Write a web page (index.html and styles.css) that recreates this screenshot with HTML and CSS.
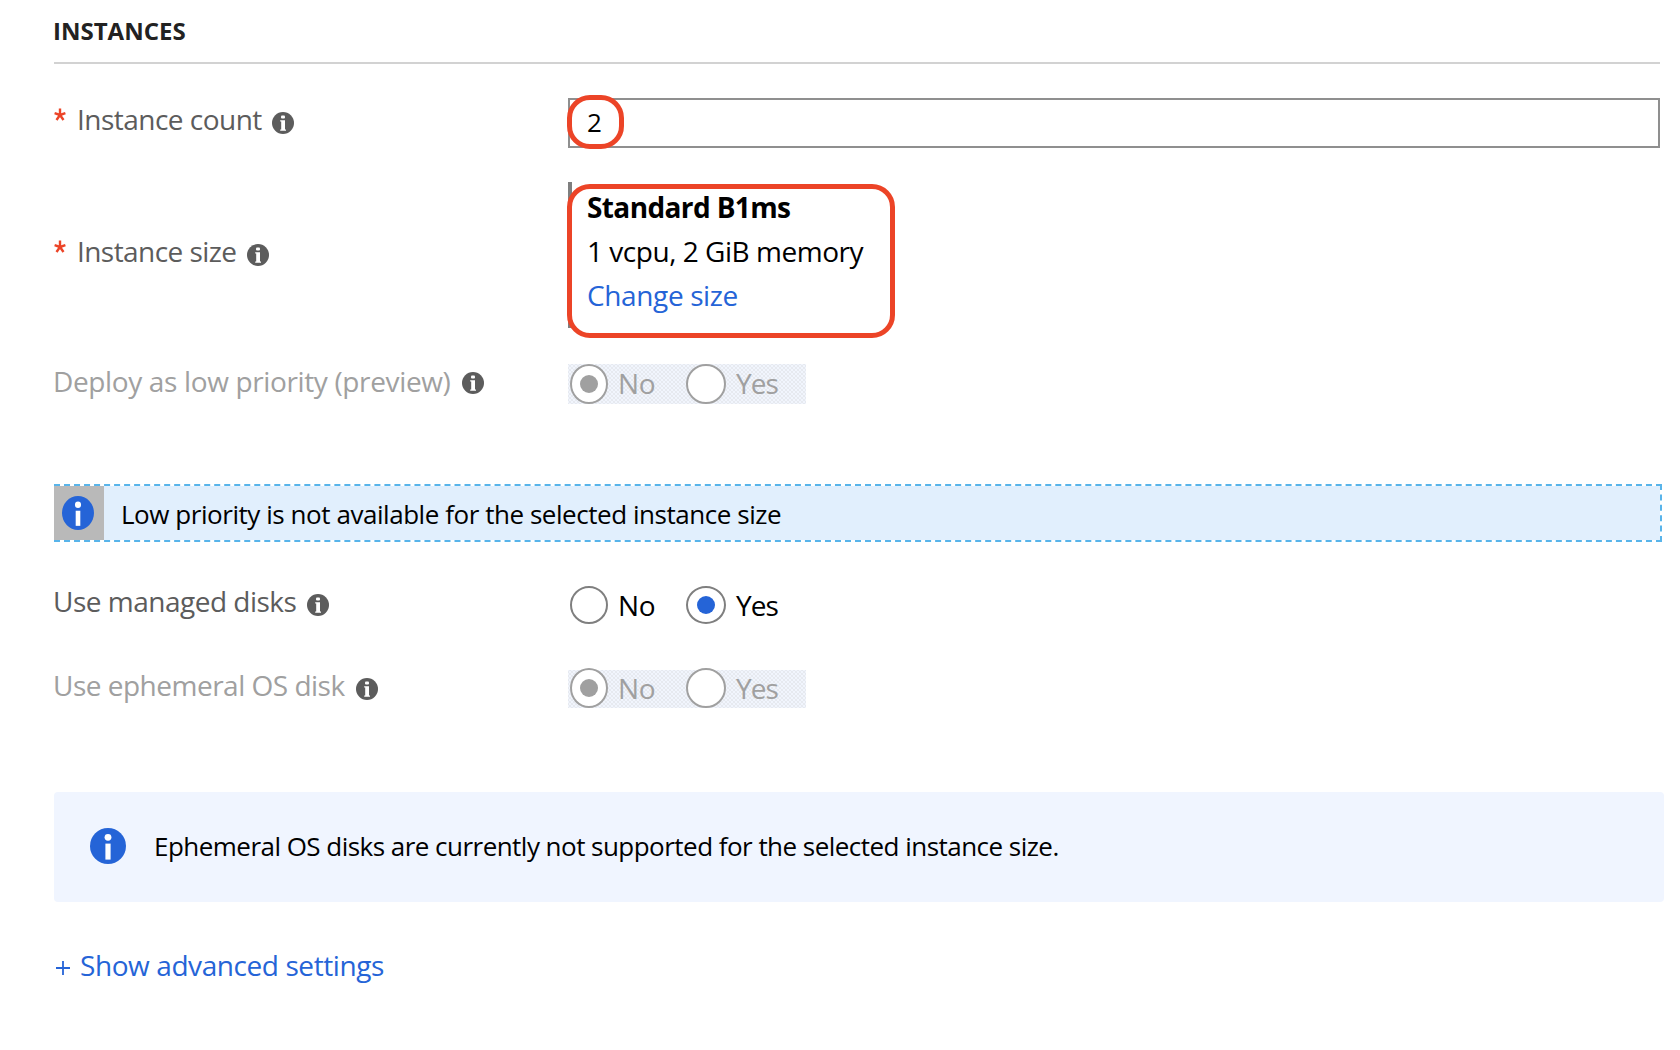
FILE: index.html
```
<!DOCTYPE html>
<html lang="en">
<head>
<meta charset="utf-8">
<title>Instances</title>
<link rel="stylesheet" href="styles.css">
</head>
<body>
<svg class="defs" aria-hidden="true">
  <symbol id="hint" viewBox="0 0 22 22">
    <circle cx="11" cy="11" r="11" fill="#5c5c5c"/>
    <rect x="9" y="3.4" width="4" height="3.2" rx="1" fill="#fff"/>
    <path d="M8.2 8.2h4.8v9.4h1v1.2H8.2v-1.2h1V9.4h-1z" fill="#fff"/>
  </symbol>
  <symbol id="info" viewBox="0 0 36 36" preserveAspectRatio="none">
    <circle cx="18" cy="18" r="18" fill="#2564d7"/>
    <circle cx="18" cy="9.3" r="3.4" fill="#fff"/>
    <rect x="15.4" y="15.6" width="5.2" height="16" fill="#fff"/>
  </symbol>
</svg>
<main class="form">
  <h2 class="title">INSTANCES</h2>

  <div class="row row-count">
    <div class="label"><svg class="req" viewBox="0 0 12 14"><path d="M6 7V.5M6 7L.6 5.2M6 7l5.4-1.8M6 7l-3.5 5M6 7l3.5 5"/></svg><span class="t-count">Instance count</span><svg class="hint"><use href="#hint"/></svg></div>
    <div class="input"><span>2</span><i class="mark mark-count"></i></div>
  </div>

  <div class="row row-size">
    <div class="label"><svg class="req" viewBox="0 0 12 14"><path d="M6 7V.5M6 7L.6 5.2M6 7l5.4-1.8M6 7l-3.5 5M6 7l3.5 5"/></svg><span class="t-size">Instance size</span><svg class="hint"><use href="#hint"/></svg></div>
    <div class="size">
      <strong>Standard B1ms</strong>
      <span class="spec">1 vcpu, 2 GiB memory</span>
      <a class="change">Change size</a>
      <i class="mark mark-size"></i>
    </div>
  </div>

  <div class="row row-priority">
    <div class="label off"><span class="t-priority">Deploy as low priority (preview)</span><svg class="hint"><use href="#hint"/></svg></div>
    <div class="radios disabled">
      <span class="radio on"></span><span class="opt no">No</span>
      <span class="radio wide"></span><span class="opt">Yes</span>
    </div>
  </div>

  <div class="banner">
    <div class="banner-icon"><svg><use href="#info"/></svg></div>
    <span>Low priority is not available for the selected instance size</span>
  </div>

  <div class="row row-managed">
    <div class="label"><span class="t-managed">Use managed disks</span><svg class="hint"><use href="#hint"/></svg></div>
    <div class="radios">
      <span class="radio"></span><span class="opt no">No</span>
      <span class="radio wide on"></span><span class="opt">Yes</span>
    </div>
  </div>

  <div class="row row-ephemeral">
    <div class="label off"><span class="t-ephemeral">Use ephemeral OS disk</span><svg class="hint"><use href="#hint"/></svg></div>
    <div class="radios disabled inset">
      <span class="radio on"></span><span class="opt no">No</span>
      <span class="radio wide"></span><span class="opt">Yes</span>
    </div>
  </div>

  <div class="notice">
    <svg><use href="#info"/></svg>
    <span>Ephemeral OS disks are currently not supported for the selected instance size.</span>
  </div>

  <a class="advanced"><svg viewBox="0 0 14 14"><path d="M7 0v14M0 7h14"/></svg><span>Show advanced settings</span></a>
</main>
</body>
</html>
```
FILE: styles.css
```
* { box-sizing: border-box; }
body {
  margin: 0;
  background: #fff;
  color: #000;
  font: 28px/40px "Open Sans", "Noto Sans", sans-serif;
  letter-spacing: -0.43px;
  white-space: nowrap;
}
svg { display: block; flex: none; }
.defs { display: none; }
.form { height: 1050px; padding: 0 20px 0 54px; overflow: hidden; }

.title {
  height: 64px;
  margin: 0;
  padding-top: 11px;
  border-bottom: 2px solid #d2d2d2;
  color: #222;
  font-size: 24px;
  font-weight: 700;
  letter-spacing: 0;
  text-indent: -1px;
}

.row { display: grid; grid-template-columns: 514px 1fr; align-items: start; }
.row-count { height: 50px; margin-top: 34px; }
.row-size { height: 146px; margin-top: 34px; }
.row-priority { height: 40px; margin-top: 36px; }
.row-managed { height: 38px; margin-top: 44px; }
.row-ephemeral { height: 40px; margin-top: 44px; }

.label { display: flex; align-items: center; color: #5c5c5c; }
.label > span { margin-left: -1px; }
.label > .req + span { margin-left: 1px; }
.label.off { color: #a0a0a0; }
.row-count .label { padding-top: 1px; }
.row-size .label { padding-top: 49px; }
.row-priority .label, .row-ephemeral .label { line-height: 34px; }
.row-managed .label { line-height: 30px; }
.t-count { letter-spacing: -0.52px; }
.t-size { letter-spacing: -0.56px; }
.t-priority { letter-spacing: -0.36px; }
.t-managed, .t-ephemeral { letter-spacing: -0.5px; }
.hint { width: 22px; height: 22px; margin: 8px 0 0 10px; }
.row-size .hint, .row-priority .hint { margin-left: 11px; }
.row-priority .hint { margin-top: 4px; }
.row-managed .hint { margin-left: 11px; }
.row-ephemeral .hint { margin-left: 11px; }
.req { width: 12px; height: 14px; margin: 0 10px 8px 0; fill: none; stroke: #ec4427; stroke-width: 2.4; }

.input {
  position: relative;
  height: 50px;
  padding: 2px 0 0 17px;
  border: 2px solid #8f8f8f;
  font-size: 26px;
}
.mark { position: absolute; border: 5px solid #ec4427; }
.mark-count { left: -3px; top: -5px; width: 57px; height: 54px; border-radius: 23px; }
.size {
  position: relative;
  display: flex;
  flex-direction: column;
  height: 146px;
  padding: 3px 0 0 14px;
  border-left: 4px solid #7f7f7f;
  line-height: 44px;
}
.size strong { padding-left: 1px; font-weight: 700; letter-spacing: -0.62px; }
.spec { padding-left: 1px; letter-spacing: -0.47px; }
.change { padding-left: 1px; color: #2564d7; letter-spacing: -0.37px; }
.mark-size { left: -5px; top: 2px; width: 328px; height: 154px; border-radius: 23px; }

.radios { display: flex; align-items: center; width: 238px; height: 38px; padding-left: 2px; line-height: 38px; }
.disabled {
  height: 40px;
  color: #a0a0a0;
  background:
    radial-gradient(circle at 50% 50%, #d0d0d0 0.5px, transparent 0.8px) 0 0 / 4px 4px,
    radial-gradient(circle at 50% 50%, #d0d0d0 0.5px, transparent 0.8px) 2px 2px / 4px 4px,
    #f1f5fd;
}
.inset { background-clip: content-box; padding: 2px 0 0; }
.inset .radio, .inset .opt { margin-top: -2px; }
.inset .radio:first-child { margin-left: 2px; }
.radio {
  display: grid;
  place-items: center;
  flex: none;
  width: 38px;
  height: 38px;
  border: 2px solid #7f7f7f;
  border-radius: 50%;
  background: #fff;
}
.radio.wide { width: 40px; }
.radio.on::before { content: ""; width: 18px; height: 18px; border-radius: 50%; background: #2564d7; }
.disabled .radio { height: 40px; border-color: #a0a0a0; }
.disabled .radio.on::before { background: #a0a0a0; }
.opt { padding-left: 10px; letter-spacing: -1px; }
.opt.no { width: 78px; letter-spacing: -0.4px; }
.row-priority .opt { padding-bottom: 2px; }

.banner {
  display: flex;
  align-items: center;
  height: 58px;
  margin: 80px -2px 0 0;
  border: 2px dashed #58b4ea;
  border-left: 0;
  background: #e1effd padding-box;
  font-size: 26px;
}
.banner span { padding: 2px 0 0 17px; letter-spacing: -0.45px; }
.banner-icon { width: 50px; height: 54px; padding: 10px 0 0 8px; background: #b9b9b9; }
.banner-icon svg { width: 32px; height: 34px; }

.notice {
  display: flex;
  align-items: center;
  height: 110px;
  margin: 84px -4px 0 0;
  padding: 0 0 2px 36px;
  border-radius: 4px;
  background: #f0f5ff;
  font-size: 26px;
}
.notice svg { width: 36px; height: 36px; }
.notice span { padding-left: 28px; letter-spacing: -0.53px; }

.advanced { display: flex; align-items: center; margin-top: 43px; padding-left: 2px; color: #2564d7; letter-spacing: -0.42px; }
.advanced svg { width: 14px; height: 14px; margin: 5px 10px 0 0; fill: none; stroke: #2564d7; stroke-width: 1.8; }
```
